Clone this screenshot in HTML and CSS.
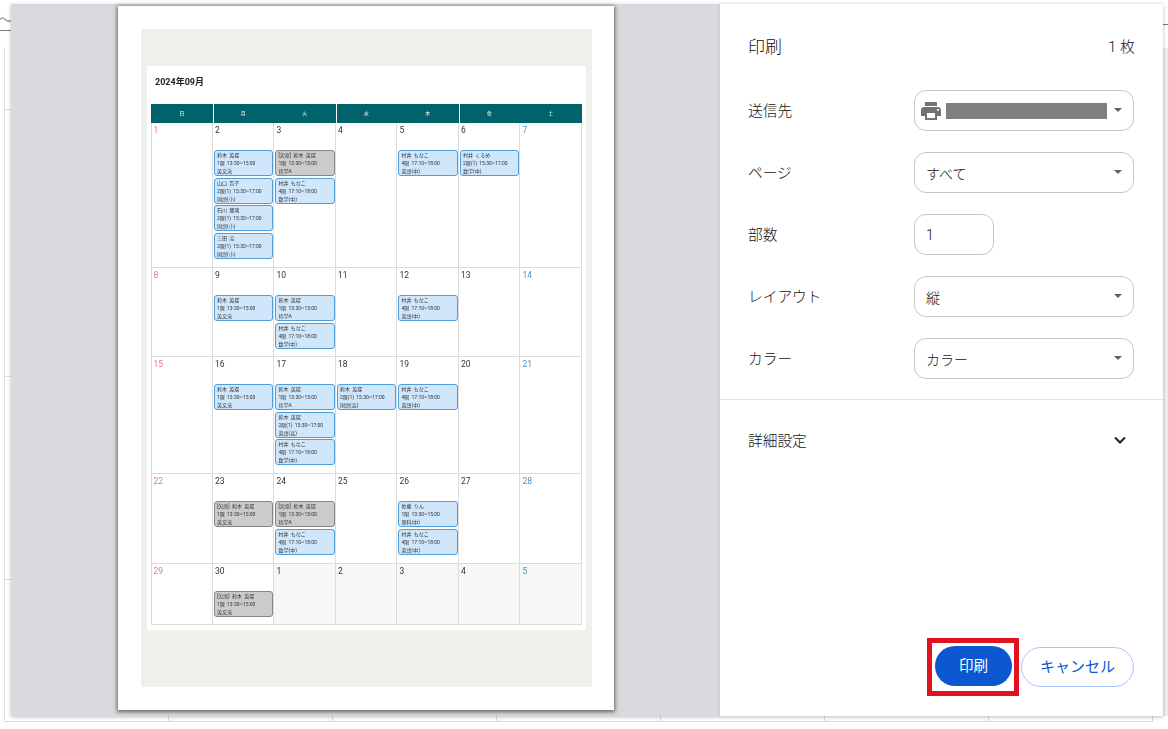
FILE: index.html
```html
<!DOCTYPE html>
<html lang="ja">
<head>
<meta charset="utf-8">
<title>印刷</title>
<link rel="stylesheet" href="styles.css">
</head>
<body>
<div class="under">
  <svg class="under-wave" viewBox="0 0 11 8" width="11" height="8"><path d="M0 3.500c2-2 3-2 5 0s3 1.500 6 1.500" fill="none" stroke="#555" stroke-width="1"/></svg>
  <div class="under-rule-left"></div>
  <div class="under-rule-right"></div>
  <div class="under-strip"></div>
  <div class="under-grid">
    <i></i><i></i><i></i><i></i><i></i><i></i><i></i>
    <i></i><i></i><i></i><i></i><i></i><i></i><i></i>
    <i></i><i></i><i></i><i></i><i></i><i></i><i></i>
    <i></i><i></i><i></i><i></i><i></i><i></i><i></i>
  </div>
</div>
<div class="dialog">
  <section class="preview">
    <div class="sheet">
      <div class="sheet-bg">
        <div class="card">
          <h1 class="month">2024年09月</h1>
          <div class="week-head">
            <div class="wh">日</div><div class="wh sep">月</div><div class="wh">火</div><div class="wh sep">水</div><div class="wh">木</div><div class="wh sep">金</div><div class="wh">土</div>
          </div>
          <div class="cal">
            <div class="day"><b class="num sun">1</b></div>
            <div class="day"><b class="num">2</b>
              <div class="ev"><span>鈴木 英琛</span><span>1限 13:30~15:00</span><span>英文法</span></div>
              <div class="ev"><span>山口 百子</span><span>2限(1) 15:30~17:00</span><span>国語(小)</span></div>
              <div class="ev"><span>石川 瑠璃</span><span>2限(1) 15:30~17:00</span><span>国語(小)</span></div>
              <div class="ev"><span>三田 凛</span><span>2限(1) 15:30~17:00</span><span>国語(小)</span></div>
            </div>
            <div class="day"><b class="num">3</b>
              <div class="ev off"><span>[欠席] 鈴木 英琛</span><span>1限 13:30~15:00</span><span>哲学A</span></div>
              <div class="ev"><span>村井 もなこ</span><span>4限 17:10~18:00</span><span>数学(中)</span></div>
            </div>
            <div class="day"><b class="num">4</b></div>
            <div class="day"><b class="num">5</b>
              <div class="ev"><span>村井 もなこ</span><span>4限 17:10~18:00</span><span>英語(中)</span></div>
            </div>
            <div class="day"><b class="num">6</b>
              <div class="ev"><span>村井 くるめ</span><span>2限(1) 15:30~17:00</span><span>数学(中)</span></div>
            </div>
            <div class="day"><b class="num sat">7</b></div>

            <div class="day"><b class="num sun">8</b></div>
            <div class="day"><b class="num">9</b>
              <div class="ev"><span>鈴木 英琛</span><span>1限 13:30~15:00</span><span>英文法</span></div>
            </div>
            <div class="day"><b class="num">10</b>
              <div class="ev"><span>鈴木 英琛</span><span>1限 13:30~15:00</span><span>哲学A</span></div>
              <div class="ev"><span>村井 もなこ</span><span>4限 17:10~18:00</span><span>数学(中)</span></div>
            </div>
            <div class="day"><b class="num">11</b></div>
            <div class="day"><b class="num">12</b>
              <div class="ev"><span>村井 もなこ</span><span>4限 17:10~18:00</span><span>英語(中)</span></div>
            </div>
            <div class="day"><b class="num">13</b></div>
            <div class="day"><b class="num sat">14</b></div>

            <div class="day"><b class="num sun">15</b></div>
            <div class="day"><b class="num">16</b>
              <div class="ev"><span>鈴木 英琛</span><span>1限 13:30~15:00</span><span>英文法</span></div>
            </div>
            <div class="day"><b class="num">17</b>
              <div class="ev"><span>鈴木 英琛</span><span>1限 13:30~15:00</span><span>哲学A</span></div>
              <div class="ev"><span>鈴木 英琛</span><span>2限(1) 15:30~17:00</span><span>英語(高)</span></div>
              <div class="ev"><span>村井 もなこ</span><span>4限 17:10~18:00</span><span>数学(中)</span></div>
            </div>
            <div class="day"><b class="num">18</b>
              <div class="ev"><span>鈴木 英琛</span><span>2限(1) 15:30~17:00</span><span>国語(高)</span></div>
            </div>
            <div class="day"><b class="num">19</b>
              <div class="ev"><span>村井 もなこ</span><span>4限 17:10~18:00</span><span>英語(中)</span></div>
            </div>
            <div class="day"><b class="num">20</b></div>
            <div class="day"><b class="num sat">21</b></div>

            <div class="day"><b class="num sun">22</b></div>
            <div class="day"><b class="num">23</b>
              <div class="ev off"><span>[欠席] 鈴木 英琛</span><span>1限 13:30~15:00</span><span>英文法</span></div>
            </div>
            <div class="day"><b class="num">24</b>
              <div class="ev off"><span>[欠席] 鈴木 英琛</span><span>1限 13:30~15:00</span><span>哲学A</span></div>
              <div class="ev"><span>村井 もなこ</span><span>4限 17:10~18:00</span><span>数学(中)</span></div>
            </div>
            <div class="day"><b class="num">25</b></div>
            <div class="day"><b class="num">26</b>
              <div class="ev"><span>佐藤 りん</span><span>1限 13:30~15:00</span><span>理科(中)</span></div>
              <div class="ev"><span>村井 もなこ</span><span>4限 17:10~18:00</span><span>英語(中)</span></div>
            </div>
            <div class="day"><b class="num">27</b></div>
            <div class="day"><b class="num sat">28</b></div>

            <div class="day"><b class="num sun">29</b></div>
            <div class="day"><b class="num">30</b>
              <div class="ev off"><span>[欠席] 鈴木 英琛</span><span>1限 13:30~15:00</span><span>英文法</span></div>
            </div>
            <div class="day next"><b class="num">1</b></div>
            <div class="day next"><b class="num">2</b></div>
            <div class="day next"><b class="num">3</b></div>
            <div class="day next"><b class="num">4</b></div>
            <div class="day next"><b class="num sat">5</b></div>
          </div>
        </div>
      </div>
    </div>
  </section>
  <aside class="side">
    <header class="side-head">
      <h2 class="side-title">印刷</h2>
      <span class="count">1 枚</span>
    </header>
    <div class="settings">
      <div class="row">
        <span class="label">送信先</span>
        <div class="field select">
          <svg class="printer" viewBox="0 0 24 24" width="24" height="24"><path d="M19 8H5c-1.660 0-3 1.340-3 3v6h4v4h12v-4h4v-6c0-1.660-1.340-3-3-3zm-3 11H8v-5h8v5zm3-7c-.55 0-1-.45-1-1s.45-1 1-1 1 .45 1 1-.45 1-1 1zm-1-9H6v4h12V3z"/></svg>
          <span class="mask"></span>
        </div>
      </div>
      <div class="row">
        <span class="label">ページ</span>
        <div class="field select"><span class="value">すべて</span></div>
      </div>
      <div class="row">
        <span class="label">部数</span>
        <div class="field copies"><span class="value">1</span></div>
      </div>
      <div class="row">
        <span class="label">レイアウト</span>
        <div class="field select"><span class="value">縦</span></div>
      </div>
      <div class="row">
        <span class="label">カラー</span>
        <div class="field select"><span class="value">カラー</span></div>
      </div>
    </div>
    <div class="more">
      <span class="label">詳細設定</span>
      <svg class="chev" viewBox="0 0 14 9" width="14" height="9"><path d="M2 1.500l5 5 5-5" fill="none" stroke="#202124" stroke-width="2"/></svg>
    </div>
    <footer class="actions">
      <div class="highlight"><button class="btn primary">印刷</button></div>
      <button class="btn ghost">キャンセル</button>
    </footer>
  </aside>
</div>
</body>
</html>
```
FILE: styles.css
```css
* { box-sizing: border-box; }
html, body { margin: 0; padding: 0; }
body {
  width: 1168px; height: 729px; overflow: hidden; background: #fff; position: relative;
  font-family: Roboto, "Noto Sans CJK JP", "Noto Sans", sans-serif; color: #202124;
}
.under { position: absolute; left: 0; top: 0; width: 1168px; height: 729px; }
.under-wave { position: absolute; left: 0; top: 16px; }
.under-rule-left { position: absolute; left: 0; top: 30px; width: 11px; border-top: 1px solid #777; }
.under-rule-right { position: absolute; left: 1163px; top: 24px; width: 5px; border-top: 1px solid #777; }
.under-strip { position: absolute; left: 1163px; top: 48px; width: 5px; height: 668px; background: #eeeeee; }
.under-grid {
  position: absolute; left: 4px; top: 48px; width: 1149px; height: 674px;
  display: grid; grid-template-columns: repeat(7, 164px);
  grid-template-rows: 62px 267px 203px 1fr;
  border-left: 1px solid #dcdcdc; border-bottom: 1px solid #dcdcdc;
}
.under-grid i { border-right: 1px solid #dcdcdc; border-bottom: 1px solid #dcdcdc; }
.under-grid i:nth-last-child(-n+7) { border-bottom: 0; }

.dialog {
  position: absolute; left: 11px; top: 4px; width: 1152px; height: 712px;
  display: flex; background: #d9dadd;
  box-shadow: 0 1px 4px rgba(0,0,0,.25);
}
.preview { width: 709px; padding: 2px 0 0 107px; }
.sheet {
  width: 496px; height: 704px; background: #fff; padding: 23px 22px 23px 23px;
  box-shadow: 0 1px 4px 1px rgba(0,0,0,.55);
}
.sheet-bg { height: 658px; background: #eef0ec; padding: 37px 6px 0; }
.card { height: 564px; background: #fff; padding: 0 4px; filter: blur(.3px); }
.month { margin: 0; height: 38px; padding: 10px 0 0 4px; font-size: 9px; line-height: 13px; font-weight: 700; color: #222; }
.week-head { display: grid; grid-template-columns: repeat(7, 61.5px); height: 19px; background: #00636b; }
.wh { color: #fff; font-size: 5px; line-height: 19px; text-align: center; }
.wh.sep { box-shadow: inset 1px 0 0 #fff; }
.cal {
  display: grid; grid-template-columns: repeat(7, 61.5px);
  grid-template-rows: 145px 89px 117px 90px 61px;
  box-shadow: inset 1px 0 0 #dcdcdc;
}
.day {
  border-right: 1px solid #dcdcdc; border-bottom: 1px solid #dcdcdc;
  padding: 0 0 0 1px; display: flex; flex-direction: column; gap: 1.400px; min-width: 0;
}
.day.next { background: #f7f7f7; }
.num {
  display: block; height: 26px; padding: 2px 0 0 1.500px;
  font: 400 8.500px/11px Roboto, sans-serif; color: #333;
}
.num.sun { color: #df7892; }
.num.sat { color: #4493c9; }
.ev {
  height: 26px; flex: none; display: flex; flex-direction: column; justify-content: center;
  background: #cfe6fb; border: 1px solid #4c9fdb; border-radius: 3px; padding: 0 2.500px;
  font-size: 5px; line-height: 8px; color: #333; overflow: hidden; word-spacing: 1px;
}
.ev span { display: block; white-space: nowrap; }
.ev.off { background: #cbcbcb; border-color: #868686; }

.side { width: 443px; background: #fff; display: flex; flex-direction: column; position: relative; box-shadow: -1px 0 3px rgba(0,0,0,.08); }
.side-head {
  display: flex; justify-content: space-between; align-items: center;
  height: 86px; padding: 0 28px 3px;
}
.side-title { margin: 0; font-size: 17px; font-weight: 300; color: #111; }
.count { font-size: 15px; font-weight: 300; color: #111; }
.settings { display: flex; flex-direction: column; gap: 21px; padding: 0 29px 0 28px; height: 310px; border-bottom: 1px solid #e3e3e3; }
.row { display: flex; justify-content: space-between; align-items: center; height: 41px; }
.label { font-size: 14.700px; font-weight: 300; color: #111; padding-bottom: 2px; }
.field { height: 41px; border: 1px solid #c6c6c6; border-radius: 12px; display: flex; align-items: center; padding: 0 11px; font-size: 14px; position: relative; }
.select { width: 220px; }
.select::after {
  content: ""; position: absolute; right: 11px; top: 17px;
  border-left: 4px solid transparent; border-right: 4px solid transparent; border-top: 4px solid #5f6368;
}
.copies { width: 80px; margin-right: 140px; }
.printer { fill: #6d7377; margin-left: -7px; flex: none; }
.mask { width: 161px; height: 16px; background: #808080; margin-left: 3px; }
.value { font-size: 14px; font-weight: 300; color: #111; }
.more { display: flex; justify-content: space-between; align-items: center; height: 81px; padding: 0 36px 0 28px; }
.actions { margin-top: auto; display: flex; align-items: center; height: 58px; margin-bottom: 20px; padding-left: 207px; gap: 2px; }
.highlight { border: 5px solid #e2121f; padding: 3px; width: 92px; height: 58px; flex: none; }
.btn { height: 40px; border-radius: 20px; font: 400 14.500px Roboto, "Noto Sans CJK JP", sans-serif; padding: 0 0 3px; }
.primary { width: 77px; background: #0b57d0; color: #fff; border: 0; display: block; }
.ghost { width: 113px; background: #fff; color: #0b57d0; border: 1px solid #a8c7fa; font-size: 15px; }
```
